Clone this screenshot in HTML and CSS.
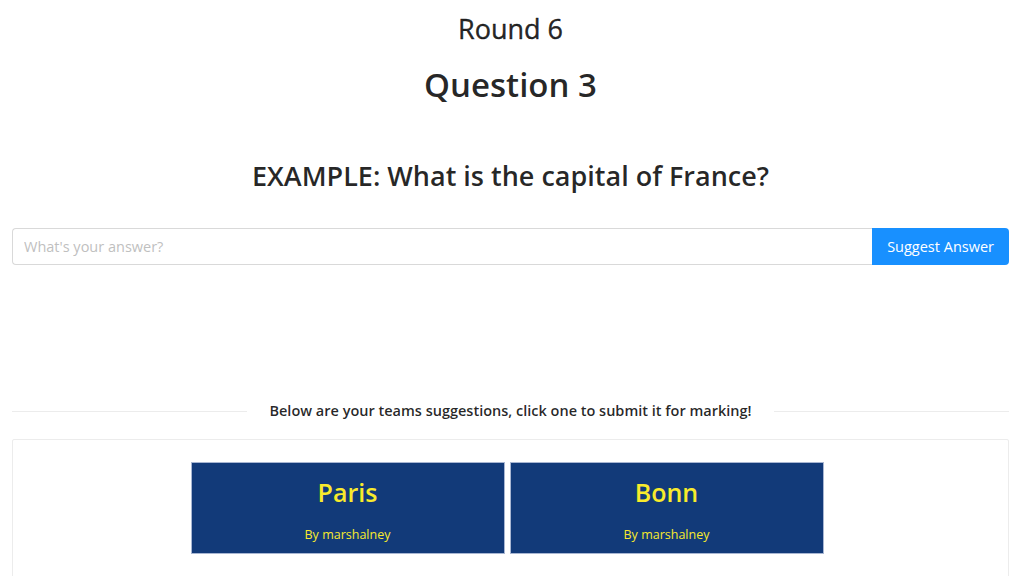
FILE: index.html
```html
<!DOCTYPE html>
<html lang="en">
<head>
  <meta charset="UTF-8">
  <title>Quiz</title>
  <meta name="viewport" content="width=device-width, initial-scale=1.0">
  <link rel="stylesheet" href="styles.css">
</head>
<body>

  <div class="page">
    <h3 class="round">Round 6</h3>
    <h1 class="question-no">Question 3</h1>
    <h2 class="question">EXAMPLE: What is the capital of France?</h2>

    <form class="answer" id="answerForm">
      <input type="text" class="answer-input" placeholder="What's your answer?">
      <button type="submit" class="answer-btn">Suggest Answer</button>
    </form>

    <div class="divider">
      <span class="divider-text">Below are your teams suggestions, click one to submit it for marking!</span>
    </div>

    <div class="card">
      <div class="suggestions">
        <div class="suggestion">
          <div class="suggestion-answer">Paris</div>
          <div class="suggestion-by">By marshalney</div>
        </div>
        <div class="suggestion">
          <div class="suggestion-answer">Bonn</div>
          <div class="suggestion-by">By marshalney</div>
        </div>
      </div>
    </div>
  </div>

</body>
</html>
```

FILE: styles.css
```css
* {
  box-sizing: border-box;
}

body {
  margin: 0;
  font-family: 'Open Sans', 'Noto Sans', sans-serif;
  color: rgba(0, 0, 0, 0.85);
  background: #fff;
}

.page {
  padding: 0 15px 0 12px;
  text-align: center;
}

.round {
  margin: 0;
  padding-top: 11px;
  font-size: 27px;
  font-weight: 500;
  line-height: 36px;
  -webkit-text-stroke: 0.4px currentColor;
}

.question-no {
  margin: 16px 0 0;
  font-size: 33px;
  font-weight: 600;
  line-height: 44px;
}

.question {
  margin: 51px 0 0;
  font-size: 27px;
  font-weight: 600;
  line-height: 36px;
}

.answer {
  display: flex;
  margin-top: 34px;
}

.answer-input {
  flex: 1;
  height: 37px;
  padding: 6px 11px;
  font-family: inherit;
  font-size: 14.5px;
  color: rgba(0, 0, 0, 0.85);
  border: 1px solid #d9d9d9;
  border-right: none;
  border-radius: 4px 0 0 4px;
  outline: none;
}

.answer-input::placeholder {
  color: #bfbfbf;
}

.answer-btn {
  height: 37px;
  padding: 0 15px;
  font-family: inherit;
  font-size: 14.5px;
  color: #fff;
  background: #1890ff;
  border: none;
  border-radius: 0 4px 4px 0;
  cursor: pointer;
}

.divider {
  display: flex;
  align-items: center;
  margin-top: 135px;
}

.divider::before,
.divider::after {
  content: "";
  flex: 1;
  border-top: 1px solid #ececec;
}

.divider-text {
  padding: 0 22px;
  font-size: 14.5px;
  font-weight: 600;
  line-height: 22px;
}

.card {
  margin-top: 17px;
  padding: 22px 31px 30px 24px;
  border: 1px solid #ececec;
  border-radius: 2px;
}

.suggestions {
  display: flex;
  justify-content: center;
  gap: 5px;
}

.suggestion {
  width: 314px;
  height: 92px;
  padding-top: 11px;
  background: #123a79;
  border: 1px solid #a8b6d2;
  color: #f8ea2c;
  cursor: pointer;
}

.suggestion-answer {
  font-size: 25px;
  font-weight: 600;
  line-height: 36px;
}

.suggestion-by {
  margin-top: 16px;
  font-size: 12.5px;
  line-height: 18px;
}
```
